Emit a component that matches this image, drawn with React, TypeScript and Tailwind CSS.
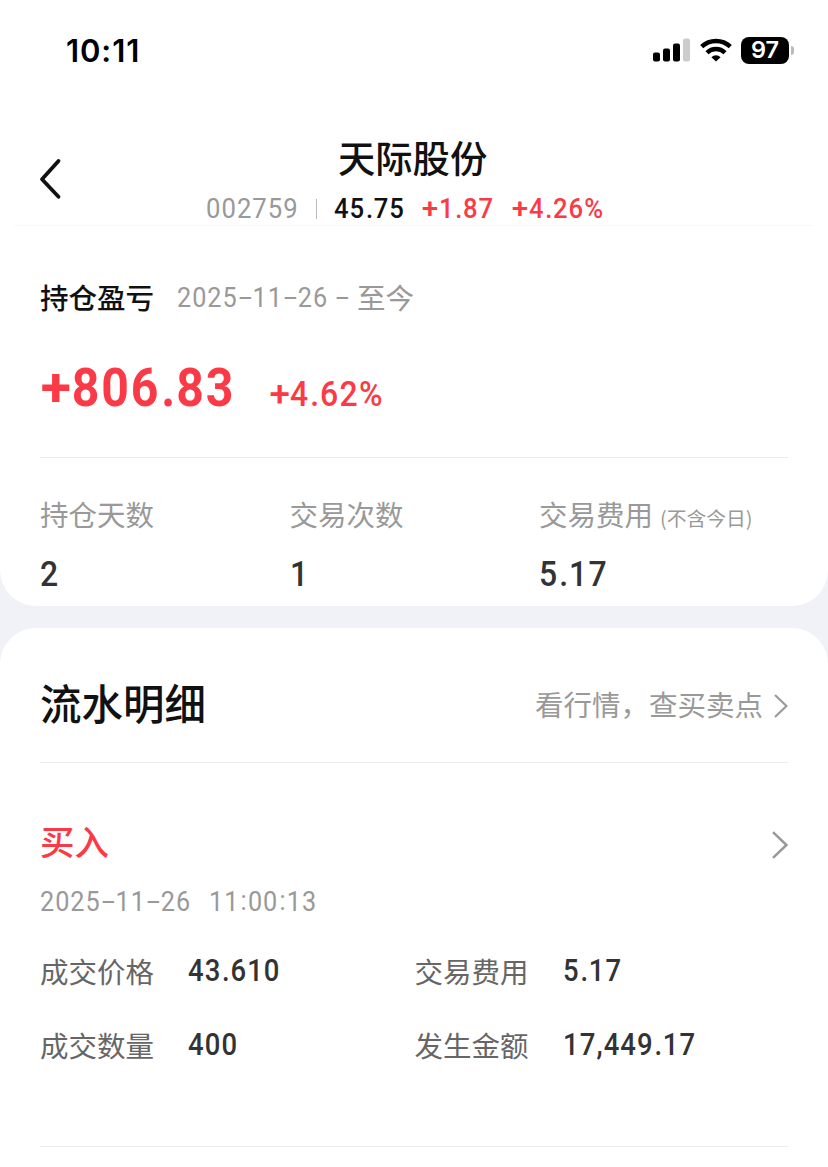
import type { ReactNode } from "react";
import clsx from "clsx";

interface NumProps {
  children: string;
  className?: string;
}

interface Stat {
  label: string;
  note?: string;
  value: string;
}

interface Detail {
  label: string;
  value: string;
}

const stats: Stat[] = [
  { label: "持仓天数", value: "2" },
  { label: "交易次数", value: "1" },
  { label: "交易费用", note: "(不含今日)", value: "5.17" },
];

const details: Detail[] = [
  { label: "成交价格", value: "43.610" },
  { label: "交易费用", value: "5.17" },
  { label: "成交数量", value: "400" },
  { label: "发生金额", value: "17,449.17" },
];

// 符号的占位宽度和字形缩放
const symbols: Record<string, { box: string; glyph: string }> = {
  "-": { box: "w-[0.59em]", glyph: "-translate-y-px scale-x-[1.9]" },
  "+": { box: "w-[0.66em]", glyph: "scale-x-[1.15]" },
  ".": { box: "w-[0.33em]", glyph: "" },
  ":": { box: "w-[0.34em]", glyph: "-translate-y-px" },
};

// 数字统一压窄, 加号、连字符、冒号和小数点单独调宽
function Num({ children, className }: NumProps) {
  return (
    <span className={clsx("font-[Roboto,sans-serif] whitespace-pre", className)}>
      <span className="inline-block origin-left scale-x-90 tracking-[0.04em]">
        {children.split(/([-.+:])/).map((part, i) => {
          const symbol = symbols[part];
          if (!symbol) return part;
          return (
            <span key={i} className={clsx("inline-block text-center tracking-normal", symbol.box)}>
              <span className={clsx("inline-block", symbol.glyph)}>{part}</span>
            </span>
          );
        })}
      </span>
    </span>
  );
}

function Chevron({ className }: { className?: string }) {
  return (
    <svg className={className} viewBox="0 0 16 28" fill="none" stroke="#999" strokeWidth="2.5">
      <path d="M1 1.2 14.4 14 1 26.8" />
    </svg>
  );
}

function StatusBar() {
  return (
    <div className="flex h-[100px] items-center justify-between pr-[34px] pl-[66px]">
      <span className="font-[Inter,sans-serif] text-[31px] leading-none font-semibold tracking-[0.9px] text-black">
        10:11
      </span>
      <div className="flex items-center">
        <svg className="h-6 w-[37px]" viewBox="0 0 37 24">
          <rect x="0" y="14.5" width="7" height="9" rx="2" />
          <rect x="10" y="10.5" width="7" height="13" rx="2" />
          <rect x="20" y="5.5" width="7" height="18" rx="2" />
          <rect x="30" y="0.5" width="7" height="23" rx="2" fill="#ccc" />
        </svg>
        <svg className="ml-2.5 h-6 w-8" viewBox="0 0 32 24" fill="none" stroke="#000" strokeWidth="4.4">
          <path d="M1.7 8.7a20.6 20.6 0 0 1 28.6 0" />
          <path d="M7 14.7a12.8 12.8 0 0 1 18 0" />
          <path d="M16 23.6 11.4 19.2a6.6 6.6 0 0 1 9.2 0z" fill="#000" stroke="none" />
        </svg>
        <div className="ml-[9px] flex h-[27px] w-12 items-center justify-center rounded-lg bg-black font-[Inter,sans-serif] text-[23.5px] leading-none font-semibold text-white">
          97
        </div>
        <div className="ml-[2px] h-[9px] w-[3px] rounded-r-full bg-[#bbb]" />
      </div>
    </div>
  );
}

function Header() {
  return (
    <header className="grid h-[125px] grid-cols-[206px_1fr] pt-8">
      <svg
        className="mt-[25px] ml-[39px] h-11 w-6"
        viewBox="0 0 24 44"
        fill="none"
        stroke="#111"
        strokeWidth="3.8"
        strokeLinecap="round"
        strokeLinejoin="round"
      >
        <path d="M19.5 4 3 22.2l16.5 17.6" />
      </svg>
      <div>
        <h1 className="ml-[132px] h-[55px] text-[37.3px] leading-[50px] font-medium text-[#111]">
          天际股份
        </h1>
        <div className="flex h-[44px] items-center text-[28.5px] leading-none">
          <Num className="w-[110px] text-[#999]">002759</Num>
          <span className="mr-[17px] h-5 w-px bg-[#bbb]" />
          <Num className="w-[88px] font-medium text-[#111]">45.75</Num>
          <Num className="w-[90px] font-medium text-[#fb3a47]">+1.87</Num>
          <Num className="font-medium text-[#fb3a47]">+4.26%</Num>
        </div>
      </div>
    </header>
  );
}

function Label({ children, className }: { children: ReactNode; className?: string }) {
  return <span className={clsx("text-[28.5px] leading-none", className)}>{children}</span>;
}

function Summary() {
  return (
    <section className="h-[381px] rounded-b-[36px] bg-white px-10">
      <div className="mx-[-26px] h-px bg-[#f8f8f8]" />
      <div className="flex h-[143px] items-center">
        <Label className="w-[137px] font-medium text-[#111]">持仓盈亏</Label>
        <Num className="w-[180px] pt-px text-[28px] leading-none text-[#999]">
          {"2025-11-26 -"}
        </Num>
        <Label className="text-[#999]">至今</Label>
      </div>
      <div className="flex h-[88px] items-baseline text-[#fb3a47]">
        <Num className="w-[229px] text-[53.5px] leading-[38px] font-bold">+806.83</Num>
        <Num className="text-[35.5px] leading-none font-medium">+4.62%</Num>
      </div>
      <div className="h-px bg-[#ebebeb]" />
      <div className="grid grid-cols-[249.5px_249.5px_1fr] pt-[42px]">
        {stats.map((item) => (
          <div key={item.label}>
            <div className="h-[56px] whitespace-nowrap text-[#999]">
              <Label>{item.label}</Label>
              {item.note && <span className="ml-[7px] text-[19.8px] leading-none">{item.note}</span>}
            </div>
            <Num className="block text-[35.5px] leading-[36px] font-medium text-[#333]">
              {item.value}
            </Num>
          </div>
        ))}
      </div>
    </section>
  );
}

function Flow() {
  return (
    <section className="h-[539px] rounded-t-[36px] bg-white px-10">
      <div className="flex h-[134px] items-center justify-between pt-[15px]">
        <h2 className="text-[41.5px] leading-none font-medium text-[#111]">流水明细</h2>
        <div className="flex items-center gap-[11px] pt-[4px]">
          <Label className="text-[#999]">看行情，查买卖点</Label>
          <Chevron className="mt-[3px] h-6 w-3.5" />
        </div>
      </div>
      <div className="h-px bg-[#ebebeb]" />
      <div className="flex h-[113px] items-end justify-between pb-[17px]">
        <span className="pb-[2px] text-[34.5px] leading-none font-medium text-[#fb3a47]">买入</span>
        <Chevron className="h-7 w-4" />
      </div>
      <div className="flex h-[52px] items-center text-[28px] leading-none text-[#999]">
        <Num className="w-[169px]">2025-11-26</Num>
        <Num>11:00:13</Num>
      </div>
      <div className="grid h-[218px] grid-cols-[374.5px_1fr] grid-rows-[74px_74px] pt-[6px]">
        {details.map((item) => (
          <div key={item.label} className="flex items-center">
            <Label className="w-[148px] text-[#666]">{item.label}</Label>
            <Num className="text-[30.5px] leading-none font-medium text-[#333]">
              {item.value}
            </Num>
          </div>
        ))}
      </div>
      <div className="h-px bg-[#ebebeb]" />
    </section>
  );
}

export default function App() {
  return (
    <div className="h-[1167px] w-[828px] overflow-hidden bg-[#f1f2f7] font-['Noto_Sans_CJK_SC',sans-serif]">
      <div className="bg-white">
        <StatusBar />
        <Header />
      </div>
      <Summary />
      <div className="h-[22px]" />
      <Flow />
    </div>
  );
}
